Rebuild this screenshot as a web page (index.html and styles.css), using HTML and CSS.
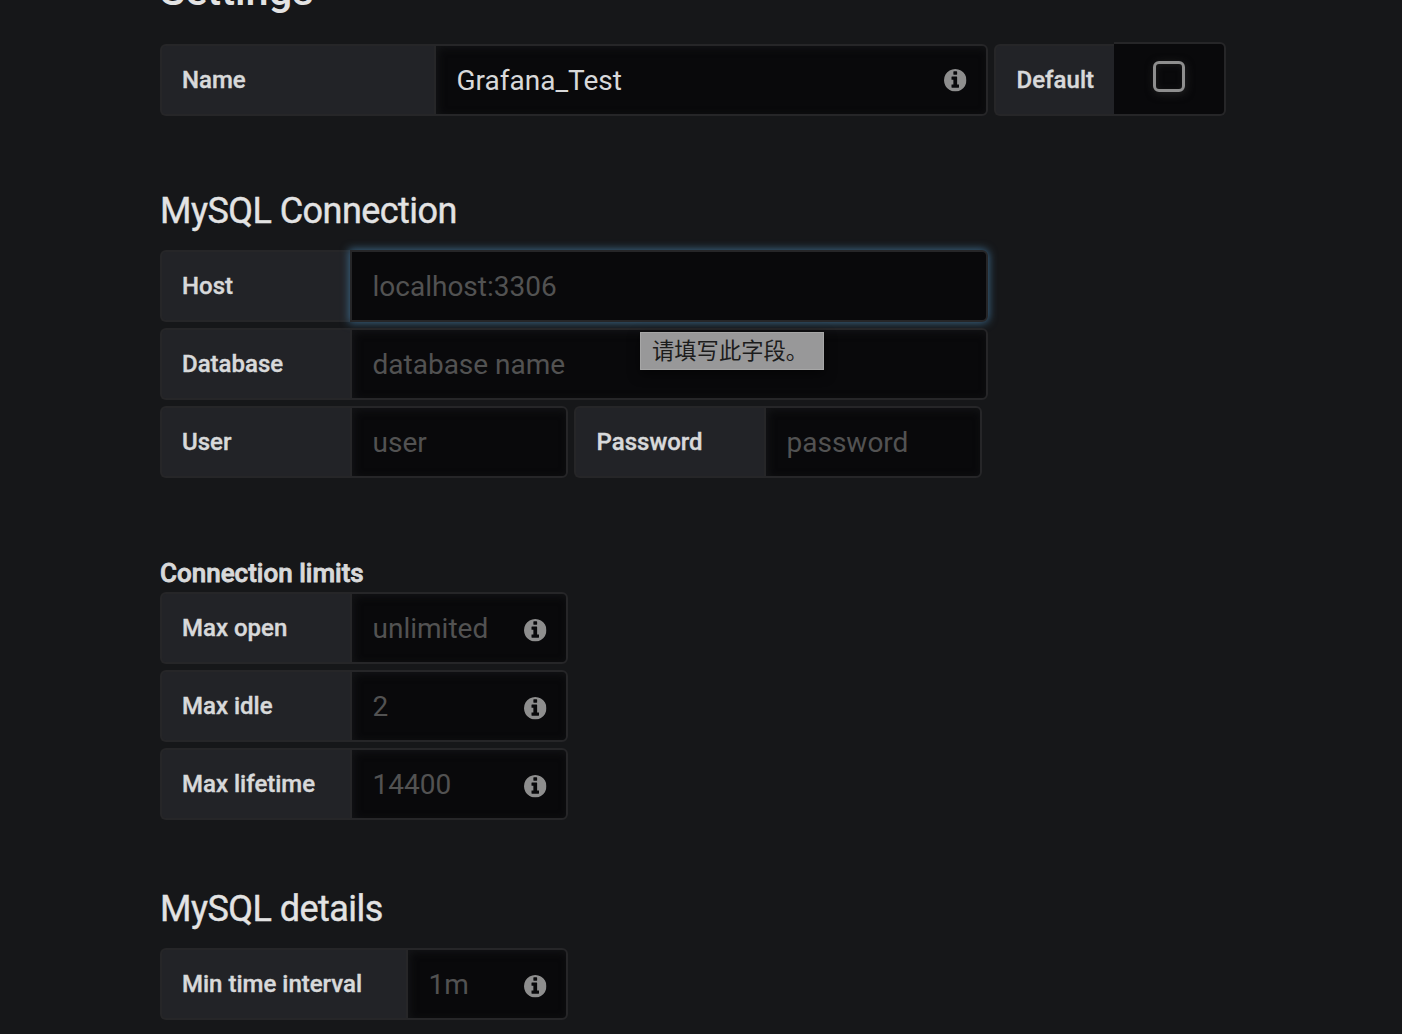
FILE: index.html
```html
<!DOCTYPE html>
<html lang="zh-CN">
<head>
<meta charset="utf-8">
<title>Grafana_Test</title>
<link rel="stylesheet" href="styles.css">
</head>
<body>
<svg class="sprite" aria-hidden="true">
  <symbol id="info" viewBox="0 0 1536 1536">
    <path d="M1024 1248v-160q0-14-9-23t-23-9h-96V544q0-14-9-23t-23-9H544q-14 0-23 9t-9 23v160q0 14 9 23t23 9h96v320h-96q-14 0-23 9t-9 23v160q0 14 9 23t23 9h448q14 0 23-9t9-23zM896 352V192q0-14-9-23t-23-9H672q-14 0-23 9t-9 23v160q0 14 9 23t23 9h192q14 0 23-9t9-23zm640 416q0 209-103 385.500T1153.500 1433 768 1536t-385.500-103T103 1153.500 0 768t103-385.500T382.500 103 768 0t385.500 103T1433 382.500 1536 768z"/>
  </symbol>
</svg>
<form class="settings">
  <h3 class="page-heading">Settings</h3>
  <div class="row">
    <div class="field field-wide">
      <label class="label" for="name">Name</label>
      <div class="control"><input class="input" id="name" value="Grafana_Test"><svg class="info info-name"><use href="#info"/></svg></div>
    </div>
    <div class="field field-default">
      <span class="label">Default</span>
      <div class="switch"><span class="checkbox"></span></div>
    </div>
  </div>

  <h3 class="heading heading-connection">MySQL Connection</h3>
  <div class="group">
    <div class="row">
      <div class="field field-host">
        <label class="label" for="host">Host</label>
        <div class="control"><input class="input input-focus" id="host" placeholder="localhost:3306"><span class="tooltip">请填写此字段。</span></div>
      </div>
    </div>
    <div class="row">
      <div class="field field-host">
        <label class="label" for="database">Database</label>
        <div class="control"><input class="input" id="database" placeholder="database name"></div>
      </div>
    </div>
    <div class="row">
      <div class="field">
        <label class="label" for="user">User</label>
        <div class="control"><input class="input" id="user" placeholder="user"></div>
      </div>
      <div class="field">
        <label class="label" for="password">Password</label>
        <div class="control"><input class="input" id="password" placeholder="password"></div>
      </div>
    </div>
  </div>

  <b class="subheading">Connection limits</b>
  <div class="group">
    <div class="field">
      <label class="label" for="open">Max open</label>
      <div class="control"><input class="input" id="open" placeholder="unlimited"><svg class="info"><use href="#info"/></svg></div>
    </div>
    <div class="field">
      <label class="label" for="idle">Max idle</label>
      <div class="control"><input class="input" id="idle" placeholder="2"><svg class="info"><use href="#info"/></svg></div>
    </div>
    <div class="field">
      <label class="label" for="lifetime">Max lifetime</label>
      <div class="control"><input class="input" id="lifetime" placeholder="14400"><svg class="info"><use href="#info"/></svg></div>
    </div>
  </div>

  <h3 class="heading heading-details">MySQL details</h3>
  <div class="field field-interval">
    <label class="label" for="interval">Min time interval</label>
    <div class="control"><input class="input" id="interval" placeholder="1m"><svg class="info"><use href="#info"/></svg></div>
  </div>
</form>
</body>
</html>
```

FILE: styles.css
```css
* { box-sizing: border-box; }

html, body { height: 100%; }

body {
  margin: 0;
  overflow: hidden;
  background: #161719;
  color: #d8d9da;
  font-family: Roboto, "Noto Sans CJK SC", sans-serif;
}

.sprite { display: none; }

.settings {
  display: flex;
  flex-direction: column;
  align-items: flex-start;
  margin-top: -33px;
  padding-left: 160px;
}

.page-heading {
  margin: 0 0 29px;
  font-size: 41.5px;
  font-weight: 500;
  line-height: 48px;
  color: #e3e3e3;
}

.heading {
  margin: 0;
  font-size: 36px;
  font-weight: 400;
  line-height: 40px;
  letter-spacing: -0.54px;
  color: #e3e3e3;
  -webkit-text-stroke: 0.4px;
}

.heading-connection { margin: 75px 0 19px; }
.heading-details { margin: 69px 0 19px; }

.subheading {
  margin: 80px 0 4px;
  font-size: 26px;
  font-weight: 500;
  line-height: 30px;
  -webkit-text-stroke: 0.8px;
}

.row { display: flex; gap: 6px; }

.group {
  display: flex;
  flex-direction: column;
  gap: 6px;
}

.field {
  display: grid;
  grid-template-columns: 190px 218px;
  height: 72px;
}

.field-wide { grid-template-columns: 274px 554px; }
.field-host { grid-template-columns: 190px 638px; }
.field-default { grid-template-columns: 120px 112px; }
.field-interval { grid-template-columns: 246px 162px; }

.label {
  padding-left: 20px;
  border: 2px solid #262628;
  border-right-width: 0;
  border-radius: 6px 0 0 6px;
  background: #222327;
  font-size: 24px;
  font-weight: 500;
  line-height: 68px;
  white-space: nowrap;
  -webkit-text-stroke: 0.4px;
}

.field + .field > .label { line-height: 68px; }
.row .field + .field > .label { padding-left: 20.6px; }

.control { position: relative; }

.input {
  display: block;
  width: 100%;
  height: 72px;
  padding: 0 20px 0 20.5px;
  border: 2px solid #262628;
  border-radius: 0 6px 6px 0;
  outline: 0;
  background: #09090b;
  box-shadow: inset 2px 2px 8px #141517;
  color: #d8d9da;
  font: 28px Roboto, sans-serif;
}

.input::placeholder { color: #525252; opacity: 1; }

.input-focus { box-shadow: 0 0 8px 1px #3a6585; }

.info {
  position: absolute;
  top: 27px;
  right: 21.5px;
  width: 22.5px;
  height: 22.5px;
  fill: #8e8e8e;
}

.info-name { top: 25px; }

.switch {
  display: flex;
  align-items: flex-start;
  justify-content: center;
  height: 74px;
  margin-top: -2px;
  padding-top: 17px;
  border: 2px solid #262628;
  border-left: 0;
  border-radius: 0 6px 6px 0;
  background: #09090b;
}

.checkbox {
  width: 32px;
  height: 31px;
  border: 3px solid #8e8e8e;
  border-radius: 6px;
  box-shadow: 1px 2px 8px #222, inset 1px 1px 6px #1a1a1a;
}

.tooltip {
  position: absolute;
  z-index: 1;
  top: 82px;
  left: 290px;
  width: 184px;
  height: 38px;
  padding-left: 11px;
  border: 1px solid #a7a7a7;
  background: #989899;
  box-shadow: 0 4px 12px #0008;
  color: #1c1c1c;
  font: 22.3px/32px "Noto Sans CJK SC", sans-serif;
  white-space: nowrap;
}
```
